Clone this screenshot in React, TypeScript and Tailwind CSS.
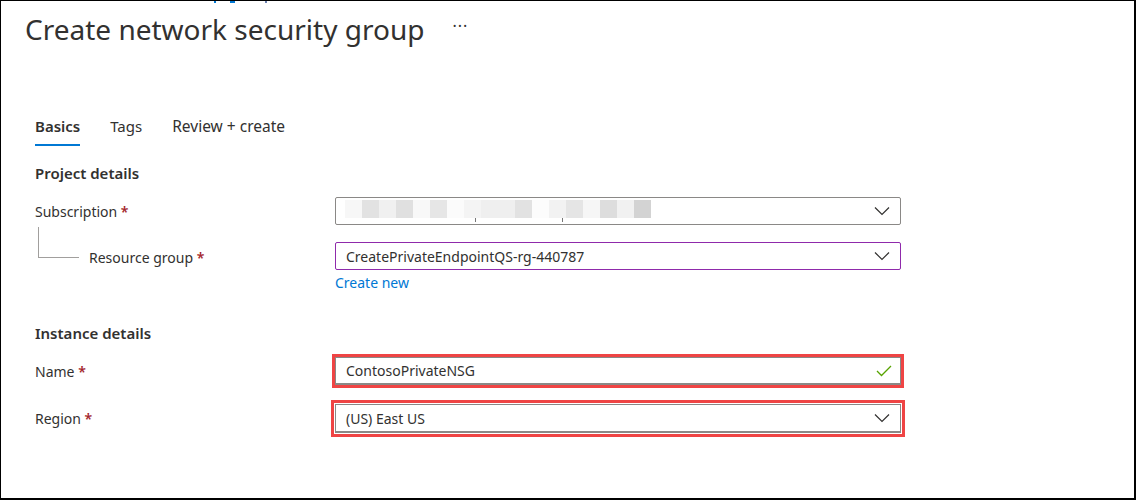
import React from "react";

const font = { fontFamily: '"Segoe UI", "Noto Sans", "Open Sans", sans-serif' };

function Chevron() {
  return (
    <svg width="16" height="10" viewBox="0 0 16 10" className="shrink-0">
      <path d="M1 1.5 L8 8.5 L15 1.5" fill="none" stroke="#323130" strokeWidth="1.2" />
    </svg>
  );
}

function Check() {
  return (
    <svg width="16" height="12" viewBox="0 0 16 12" className="shrink-0">
      <path d="M1 6 L5.5 10.5 L15 1" fill="none" stroke="#57a300" strokeWidth="1.3" />
    </svg>
  );
}

function Label({ text, indent }: { text: string; indent?: boolean }) {
  return (
    <div className={`text-[14px] text-[#323130] ${indent ? "pl-[51px]" : ""}`}>
      {text} <span className="text-[#a4262c] font-semibold">*</span>
    </div>
  );
}

const blurBlocks = [
  "#f7f7f7", "#e2e2e2", "#f0f0f0", "#e0e0e0", "#f8f8f8", "#e6e6e6", "#fbfbfb", "#f4f4f4",
  "#efefef", "#efefef", "#e2e2e2", "#fcfcfc", "#f2f2f2", "#e5e5e5", "#f6f6f6", "#dddddd",
  "#f1f1f1", "#d3d3d3",
];

export default function App() {
  return (
    <div
      className="w-[1136px] h-[500px] bg-white border border-black border-r-2 border-b-2 overflow-hidden"
      style={font}
    >
      {/* clipped breadcrumb remnants */}
      <div className="h-[2px] flex items-start pl-[213px]">
        <span className="w-[2px] h-[2px] bg-[#0078d4]" />
        <span className="ml-[14px] w-[5px] h-[2px] bg-[#0078d4]" />
        <span className="ml-[30px] w-[2px] h-[2px] bg-[#6a7fb0]" />
      </div>

      <div className="flex items-center pl-[24px] pt-[10px] h-[42px]">
        <h1 className="text-[28px] text-[#323130] leading-none">Create network security group</h1>
        <span className="ml-[28px] text-[16px] text-[#323130] tracking-[1px] -mt-[6px]">···</span>
      </div>

      <div className="flex gap-[30px] pl-[34px] mt-[71px] text-[15px] text-[#323130]">
        <div className="flex flex-col">
          <span className="font-semibold leading-[20px]">Basics</span>
          <span className="mt-[8px] h-[2px] bg-[#0078d4]" />
        </div>
        <span className="leading-[20px]">Tags</span>
        <span className="leading-[20px] text-[15.5px]">Review + create</span>
      </div>

      <div className="pl-[34px] mt-[17px] text-[15px] font-semibold text-[#323130] leading-[20px]">
        Project details
      </div>

      <div className="flex items-center mt-[14px] pl-[34px]">
        <div className="w-[300px]">
          <Label text="Subscription" />
        </div>
        <div className="w-[566px] h-[28px] border border-[#8a8886] rounded-[2px] flex items-center pl-[9px] pr-[10px]">
          <div className="relative flex flex-1 h-[18px] -mt-[4px]">
            {blurBlocks.map((c, i) => (
              <span key={i} className="w-[17px] h-[18px]" style={{ backgroundColor: c }} />
            ))}
            <span className="absolute left-[130px] top-[18px] w-px h-[4px] bg-[#777]" />
            <span className="absolute left-[217px] top-[18px] w-px h-[4px] bg-[#777]" />
          </div>
          <Chevron />
        </div>
      </div>

      <div className="flex mt-[17px] pl-[37px]">
        <div className="w-[297px] relative">
          <div className="absolute left-0 -top-[15px] w-[41px] h-[31px] border-l border-b border-[#a19f9d]" />
          <div className="pt-[5px]">
            <Label text="Resource group" indent />
          </div>
        </div>
        <div className="flex flex-col">
          <div className="w-[566px] h-[28px] border border-[#8f2aab] rounded-[2px] flex items-center justify-between pl-[10px] pr-[10px]">
            <span className="text-[14px] text-[#323130]">CreatePrivateEndpointQS-rg-440787</span>
            <Chevron />
          </div>
          <span className="text-[14px] text-[#0078d4] mt-[3px] leading-[20px]">Create new</span>
        </div>
      </div>

      <div className="pl-[34px] mt-[30px] text-[15px] font-semibold text-[#323130] leading-[20px]">
        Instance details
      </div>

      <div className="flex items-center mt-[14px] pl-[34px]">
        <div className="w-[300px]">
          <Label text="Name" />
        </div>
        <div className="w-[566px] h-[28px] border border-[#8a8886] border-b-2 outline-3 outline-[#ef4444] flex items-center justify-between pl-[10px] pr-[8px]">
          <span className="text-[14px] text-[#323130]">ContosoPrivateNSG</span>
          <Check />
        </div>
      </div>

      <div className="flex items-center mt-[19px] pl-[34px]">
        <div className="w-[300px]">
          <Label text="Region" />
        </div>
        <div className="w-[566px] h-[29px] border border-[#8a8886] border-b-2 outline-3 outline-offset-1 outline-[#ef4444] flex items-center justify-between pl-[10px] pr-[10px]">
          <span className="text-[14px] text-[#323130]">(US) East US</span>
          <Chevron />
        </div>
      </div>
    </div>
  );
}
